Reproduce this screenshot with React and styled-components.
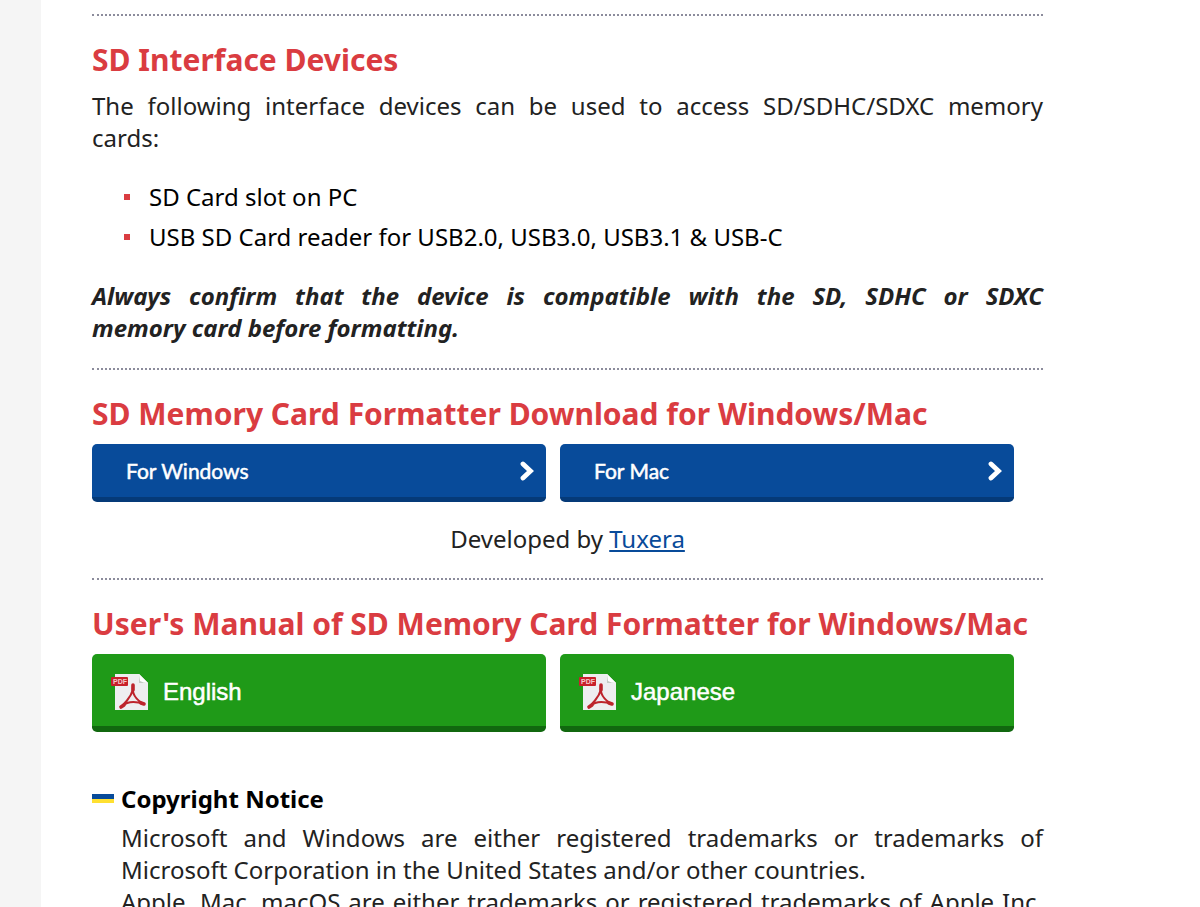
import React from 'react';
import styled, { createGlobalStyle } from 'styled-components';

const GlobalStyle = createGlobalStyle`
body {
    margin: 0;
    background: #fff;
}
* {
    box-sizing: border-box;
}
`
const Page = styled.div`
display: flex;
height: 100vh;
overflow: hidden;
font-family: "Noto Sans", "Open Sans", sans-serif;
font-size: 24px;
line-height: 32px;
color: #222;
`
const Gutter = styled.div`
flex: 0 0 41px;
background: #f5f5f5;
`
const Content = styled.main`
flex: 1;
min-width: 0;
padding: 14px 157px 0 51px;
`
const Section = styled.section`
border-top: 2px dotted #8c8c9c;
padding-top: 24px;
padding-bottom: ${props => props.$bottom || 24}px;
`
const Title = styled.h2`
margin: 0 0 10px;
font-size: 30px;
line-height: 40px;
font-weight: 700;
white-space: nowrap;
color: #da3c41;
`
const Text = styled.p`
margin: 0;
`
const Line = styled.span`
display: block;
text-align: justify;
text-align-last: ${props => props.$full ? 'justify' : 'auto'};
`
const Warning = styled(Text)`
font-weight: 700;
font-style: italic;
`
const Devices = styled.ul`
list-style: none;
margin: 23px 0;
padding: 0 0 0 32px;
color: #000;
`
const Device = styled.li`
display: flex;
align-items: center;
gap: 19px;
line-height: 40px;

&::before {
    content: "";
    width: 6px;
    height: 6px;
    background: #da3c41;
}
`
const Buttons = styled.div`
display: grid;
grid-template-columns: 1fr 1fr;
gap: 14px;
padding-right: 29px;
`
const Download = styled.a`
display: flex;
align-items: center;
justify-content: space-between;
height: 58px;
padding: 0 12px 0 34px;
border-bottom: 5px solid #053a78;
border-radius: 5px;
background: #084b9a;
color: #fff;
font-family: Lato, sans-serif;
font-size: 21px;
text-decoration: none;
-webkit-text-stroke: 0.5px #fff;
`
const Manual = styled.a`
display: flex;
align-items: center;
gap: 14px;
height: 78px;
padding: 4px 0 0 19px;
border-bottom: 6px solid #11680f;
border-radius: 5px;
background: #1f9a18;
color: #fff;
font-family: "Liberation Sans", Arial, sans-serif;
font-size: 24px;
text-decoration: none;
-webkit-text-stroke: 0.5px #fff;
`
const Credit = styled.p`
margin: 21px 0 0;
text-align: center;

a {
    color: #084b9a;
}
`
const Notice = styled.section`
display: grid;
grid-template-columns: 22px 1fr;
column-gap: 7px;
padding-top: 20px;
`
const Flag = styled.span`
height: 9px;
margin-top: 11px;
border-top: 5px solid #084b9a;
background: #ffe031;
`
const NoticeTitle = styled.h3`
margin: 0 0 7px;
font-size: 24px;
line-height: 32px;
color: #000;
`
const NoticeText = styled.div`
grid-column: 2;
`

const Arrow = () => (
    <svg width="14" height="20" viewBox="0 0 14 20" fill="none" aria-hidden="true">
        <path d="M3 3L10.5 10L3 17" stroke="#fff" strokeWidth="4.8" strokeLinecap="round" />
    </svg>
)

const PdfIcon = () => (
    <svg width="38" height="38" viewBox="0 0 38 38" aria-hidden="true">
        <path d="M4 1H28L37 10V37H4Z" fill="#eeeef0" />
        <path d="M28 1V10H37Z" fill="#c4ccc4" />
        <path d="M28 1L29 8Q32 10 37 10Z" fill="#fff" />
        <rect x="0" y="4" width="17" height="9" rx="1" fill="#c8202a" />
        <text x="2" y="11" fontSize="7" fontWeight="700" fill="#f3c9cb" stroke="none">PDF</text>
        <g fill="none" stroke="#bd242c" strokeLinecap="round">
            <path d="M22 13Q23 21 11 33M22 13Q20 24 33 31M11 33Q19 26 33 31" strokeWidth="2" />
            <path d="M22 12V17M10 34L13 32M30 30L33 31" strokeWidth="3.6" />
        </g>
    </svg>
)

const App = () => {
    return (
        <>
            <GlobalStyle />
            <Page>
                <Gutter />
                <Content>
                    <Section>
                        <Title>SD Interface Devices</Title>
                        <Text>
                            <Line $full>The following interface devices can be used to access SD/SDHC/SDXC memory </Line>
                            <Line>cards:</Line>
                        </Text>
                        <Devices>
                            <Device>SD Card slot on PC</Device>
                            <Device>USB SD Card reader for USB2.0, USB3.0, USB3.1 &amp; USB-C</Device>
                        </Devices>
                        <Warning>
                            <Line $full>Always confirm that the device is compatible with the SD, SDHC or SDXC </Line>
                            <Line>memory card before formatting.</Line>
                        </Warning>
                    </Section>
                    <Section $bottom={23}>
                        <Title>SD Memory Card Formatter Download for Windows/Mac</Title>
                        <Buttons>
                            <Download href="#windows">For Windows<Arrow /></Download>
                            <Download href="#mac">For Mac<Arrow /></Download>
                        </Buttons>
                        <Credit>Developed by <a href="#tuxera">Tuxera</a></Credit>
                    </Section>
                    <Section $bottom={31}>
                        <Title>User's Manual of SD Memory Card Formatter for Windows/Mac</Title>
                        <Buttons>
                            <Manual href="#english"><PdfIcon />English</Manual>
                            <Manual href="#japanese"><PdfIcon />Japanese</Manual>
                        </Buttons>
                    </Section>
                    <Notice>
                        <Flag />
                        <NoticeTitle>Copyright Notice</NoticeTitle>
                        <NoticeText>
                            <Text>
                                <Line $full>Microsoft and Windows are either registered trademarks or trademarks of </Line>
                                <Line>Microsoft Corporation in the United States and/or other countries.</Line>
                            </Text>
                            <Text>
                                <Line $full>Apple, Mac, macOS are either trademarks or registered trademarks of Apple Inc.</Line>
                            </Text>
                        </NoticeText>
                    </Notice>
                </Content>
            </Page>
        </>
    );
}

export default App;
